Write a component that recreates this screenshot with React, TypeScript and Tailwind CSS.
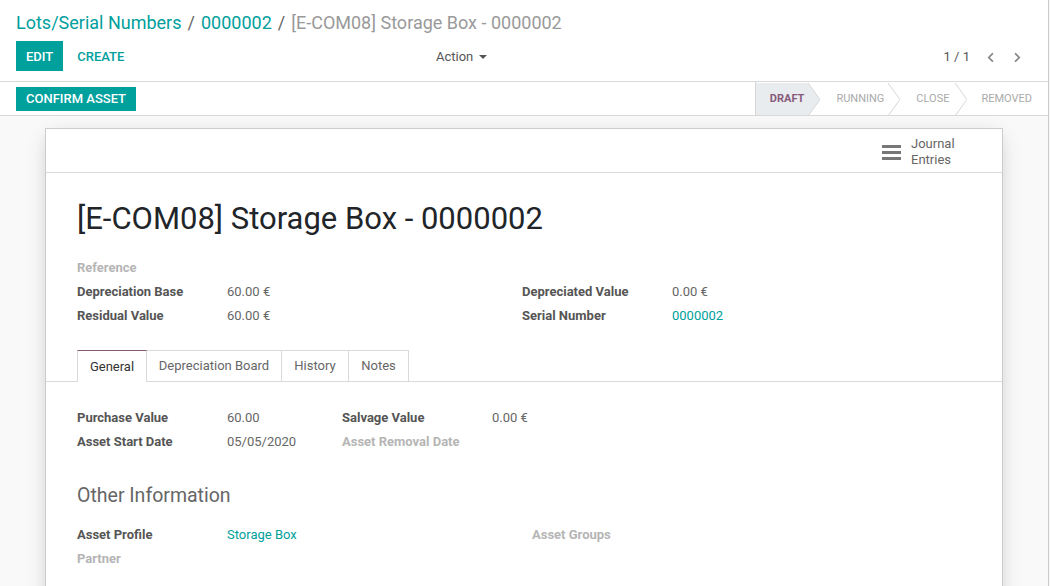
import { FaChevronLeft, FaChevronRight } from "react-icons/fa";

function Arrow({ filled }: { filled?: boolean }) {
    return (
        <svg width="12" height="33" viewBox="0 0 12 33" className="block shrink-0">
            {filled && <polygon points="0,0 12,16.5 0,33" fill="#e9ecef" />}
            <polyline points="0,0 12,16.5 0,33" fill="none" stroke="#d6d6d6" strokeWidth="1" />
        </svg>
    );
}

function Field({ label, value, light, link, lw = "w-[150px]" }: { label: string; value?: string; light?: boolean; link?: boolean; lw?: string }) {
    return (
        <div className="flex h-[24px] items-center pt-[2px] text-[13px]">
            <div className={`${lw} shrink-0 font-bold ${light ? "text-[#b5b5b5]" : "text-[#555]"}`}>{label}</div>
            {value && <div className={link ? "text-[#00a09d]" : "text-[#666]"}>{value}</div>}
        </div>
    );
}

export default function App() {
    return (
        <div className="w-[1050px] h-[586px] overflow-hidden bg-[#f9f9f9] font-['Roboto',sans-serif]">
            <div className="w-[1049px] h-full border-r border-[#ccc]">
                <div className="bg-white">
                    <div className="h-[82px] border-b border-[#d9d9d9] px-4 pt-[10px]">
                        <div className="flex items-center text-[18px] leading-[26px] gap-[6px]">
                            <span className="text-[#00a09d]">Lots/Serial Numbers</span>
                            <span className="text-[#666]">/</span>
                            <span className="text-[#00a09d]">0000002</span>
                            <span className="text-[#666]">/</span>
                            <span className="text-[#999]">[E-COM08] Storage Box - 0000002</span>
                        </div>
                        <div className="mt-[5px] flex h-[30px] items-center">
                            <div className="flex w-[404px] items-center gap-[4px]">
                                <button className="h-[30px] bg-[#00a09d] px-[10px] pt-[2px] text-[13px] font-medium text-white">EDIT</button>
                                <button className="h-[30px] px-[10px] pt-[2px] text-[13px] font-medium text-[#00a09d]">CREATE</button>
                            </div>
                            <div className="ml-[16px] flex items-center gap-[6px] pt-[2px] text-[13px] text-[#555]">
                                Action
                                <span className="border-x-[4px] border-t-[4px] border-x-transparent border-t-[#555]" />
                            </div>
                            <div className="ml-auto mr-[9px] flex items-center pt-[2px] text-[13px] text-[#555]">
                                <span>1 / 1</span>
                                <FaChevronLeft className="ml-[15px] text-[11px] text-[#888]" />
                                <FaChevronRight className="ml-[16px] text-[11px] text-[#888]" />
                            </div>
                        </div>
                    </div>
                    <div className="flex h-[34px] items-center border-b border-[#d9d9d9] pl-4">
                        <button className="h-[24px] bg-[#00a09d] px-[10px] text-[13px] font-medium text-white">CONFIRM ASSET</button>
                        <div className="ml-auto flex h-full items-stretch border-l border-[#d6d6d6] pt-[1px] text-[11px] text-[#aaa]">
                            <div className="flex items-center bg-[#e9ecef] pl-[14px] pr-[4px] font-bold text-[#875a7b]">DRAFT</div>
                            <Arrow filled />
                            <div className="flex items-center pl-[16px] pr-[4px]">RUNNING</div>
                            <Arrow />
                            <div className="flex items-center pl-[16px] pr-[6px]">CLOSE</div>
                            <Arrow />
                            <div className="flex items-center pl-[14px] pr-[16px]">REMOVED</div>
                        </div>
                    </div>
                </div>
                <div className="mx-[45px] mt-[12px] h-[500px] border border-[#ccc] bg-white shadow-[0_5px_20px_-5px_rgba(0,0,0,0.25)]">
                    <div className="flex h-[44px] items-center border-b border-[#d9d9d9] pt-[3px]">
                        <div className="ml-auto flex w-[120px] items-center gap-[10px] text-[13px] leading-[16px] text-[#666]">
                            <div className="flex w-[19px] flex-col gap-[3px]">
                                <span className="h-[3px] bg-[#777]" />
                                <span className="h-[3px] bg-[#777]" />
                                <span className="h-[3px] bg-[#777]" />
                            </div>
                            <div>Journal<br />Entries</div>
                        </div>
                    </div>
                    <div className="px-[31px] pt-[28px]">
                        <h1 className="text-[31px] leading-[36px] text-[#212529]">[E-COM08] Storage Box - 0000002</h1>
                        <div className="mt-[18px] flex">
                            <div className="w-[445px]">
                                <Field label="Reference" light />
                                <Field label="Depreciation Base" value="60.00 €" />
                                <Field label="Residual Value" value="60.00 €" />
                            </div>
                            <div className="pt-[24px]">
                                <Field label="Depreciated Value" value="0.00 €" />
                                <Field label="Serial Number" value="0000002" link />
                            </div>
                        </div>
                    </div>
                    <div className="mt-[23px] flex border-b border-[#d9d9d9] pl-[31px] text-[13px]">
                        <div className="-mb-px flex h-[32px] w-[70px] items-center justify-center border-x border-t border-x-[#d9d9d9] border-t-[#875a7b] bg-white text-[#333]">General</div>
                        <div className="flex h-[31px] w-[135px] items-center justify-center border-t border-r border-[#d9d9d9] text-[#666]">Depreciation Board</div>
                        <div className="flex h-[31px] w-[67px] items-center justify-center border-t border-r border-[#d9d9d9] text-[#666]">History</div>
                        <div className="flex h-[31px] w-[60px] items-center justify-center border-t border-r border-[#d9d9d9] text-[#666]">Notes</div>
                    </div>
                    <div className="px-[31px] pt-[23px]">
                        <div className="flex">
                            <div className="w-[265px]">
                                <Field label="Purchase Value" value="60.00" />
                                <Field label="Asset Start Date" value="05/05/2020" />
                            </div>
                            <div>
                                <Field label="Salvage Value" value="0.00 €" />
                                <Field label="Asset Removal Date" light />
                            </div>
                        </div>
                        <h2 className="mt-[31px] text-[19.5px] leading-[24px] text-[#666]">Other Information</h2>
                        <div className="mt-[14px] flex">
                            <div className="w-[455px]">
                                <Field label="Asset Profile" value="Storage Box" link />
                                <Field label="Partner" light />
                            </div>
                            <div>
                                <Field label="Asset Groups" light />
                            </div>
                        </div>
                    </div>
                </div>
            </div>
        </div>
    );
}
